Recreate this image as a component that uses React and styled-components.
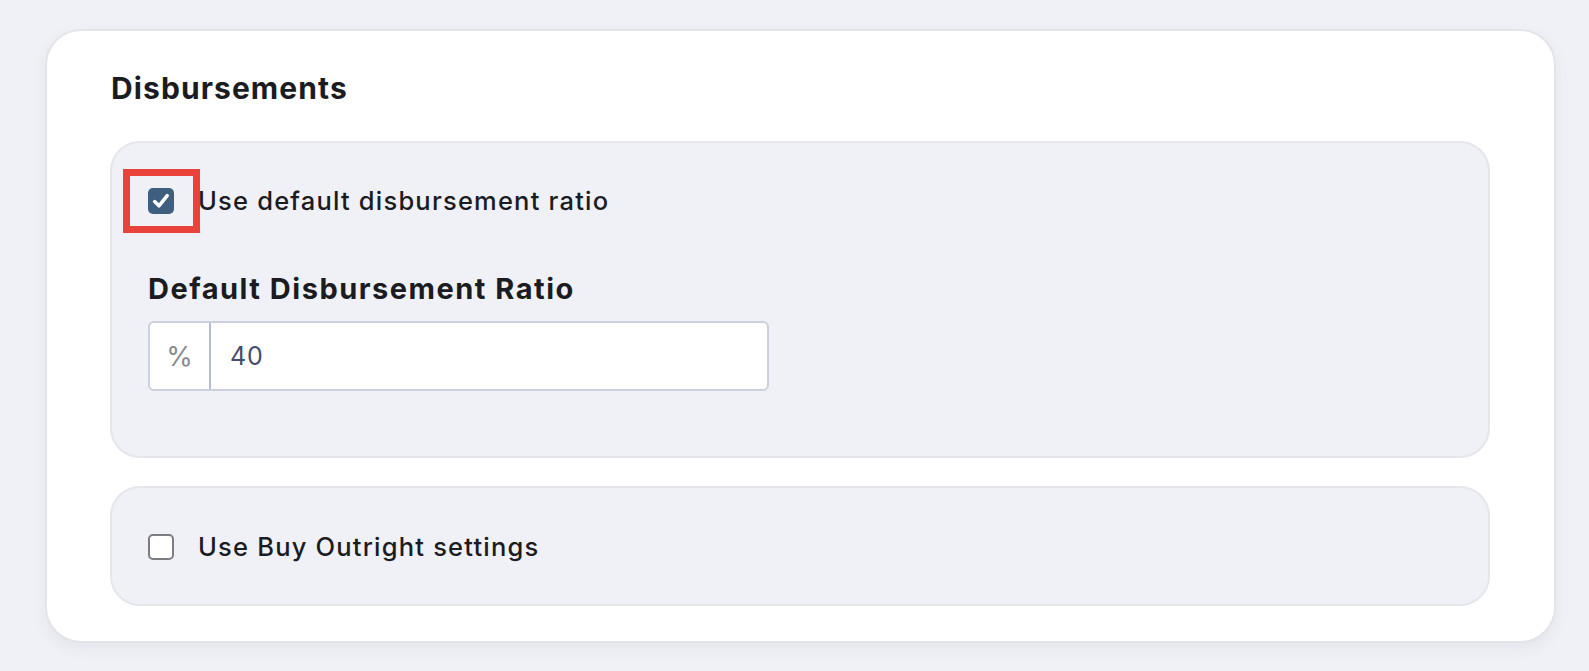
import React, { useState } from 'react'
import styled, { createGlobalStyle } from 'styled-components'

const GlobalStyle = createGlobalStyle`
  * {
    margin: 0;
    padding: 0;
    box-sizing: border-box;
  }
  html, body {
    overflow: hidden;
  }
  body {
    background: #f0f1f6;
    font-family: Inter, 'Noto Sans', sans-serif;
    color: #1b1c21;
  }
`

const Page = styled.div`
  padding: 29px 33px 24px 45px;
`

const Card = styled.section`
  background: #ffffff;
  border: 2px solid #e3e4e9;
  border-radius: 36px;
  box-shadow: 0 6px 16px rgba(40, 50, 90, 0.06);
  padding: 39px 64px 35px 63px;
  display: flex;
  flex-direction: column;
`

const Title = styled.h2`
  font-size: 30px;
  font-weight: 700;
  letter-spacing: 1.1px;
  line-height: 36px;
  margin-left: 1px;
  margin-bottom: 35px;
`

const Panel = styled.div`
  background: #f0f1f6;
  border: 2px solid #e4e6eb;
  border-radius: 30px;
  padding: ${p => p.$pad};
  display: flex;
  flex-direction: column;
  & + & {
    margin-top: 28px;
  }
`

const CheckRow = styled.label`
  display: flex;
  align-items: center;
  gap: 24px;
  font-size: 25.5px;
  font-weight: 500;
  letter-spacing: 1.2px;
  line-height: 30px;
  cursor: pointer;
`

const Highlight = styled.span`
  display: flex;
  padding: ${p => (p.$on ? '12px 19px 12px 18px' : '0')};
  margin: ${p => (p.$on ? '-19px -26px -19px -25px' : '0')};
  border: ${p => (p.$on ? '7px solid #e9423a' : 'none')};
`

const Box = styled.span`
  width: 26px;
  height: 26px;
  border-radius: 5px;
  display: flex;
  align-items: center;
  justify-content: center;
  background: ${p => (p.$checked ? '#3e5f7e' : '#ffffff')};
  border: ${p => (p.$checked ? 'none' : '2px solid #7c7d82')};
`

const FieldLabel = styled.div`
  font-size: 29px;
  font-weight: 700;
  line-height: 35px;
  letter-spacing: 1.5px;
  margin-top: 55px;
  margin-bottom: 15px;
`

const InputGroup = styled.div`
  display: flex;
  width: 621px;
  height: 70px;
  background: #ffffff;
  border: 2px solid #cbd0e0;
  border-radius: 6px;
`

const Prefix = styled.span`
  width: 61px;
  display: flex;
  align-items: center;
  justify-content: center;
  font-size: 27px;
  color: #8a8a8e;
  border-right: 2px solid #b3bcd6;
`

const Input = styled.input`
  flex: 1;
  border: none;
  outline: none;
  background: transparent;
  padding-left: 19px;
  font-family: inherit;
  font-size: 25px;
  letter-spacing: 0.8px;
  color: #444d6b;
`

function Check({ checked, highlight, onToggle, children }) {
  return (
    <CheckRow onClick={onToggle}>
      <Highlight $on={highlight}>
        <Box $checked={checked}>
          {checked && (
            <svg width="22" height="22" viewBox="0 0 22 22">
              <path d="M4.6 11.6 L9 15.8 L17.2 5.6" fill="none" stroke="#fff" strokeWidth="3.5" strokeLinecap="round" strokeLinejoin="round" />
            </svg>
          )}
        </Box>
      </Highlight>
      {children}
    </CheckRow>
  )
}

export default function App() {
  const [useDefault, setUseDefault] = useState(true)
  const [buyOutright, setBuyOutright] = useState(false)
  const [ratio, setRatio] = useState('40')

  return (
    <Page>
      <GlobalStyle />
      <Card>
        <Title>Disbursements</Title>
        <Panel $pad="43px 38px 65px 36px">
          <Check checked={useDefault} highlight onToggle={() => setUseDefault(!useDefault)}>
            Use default disbursement ratio
          </Check>
          <FieldLabel>Default Disbursement Ratio</FieldLabel>
          <InputGroup>
            <Prefix>%</Prefix>
            <Input value={ratio} onChange={e => setRatio(e.target.value)} />
          </InputGroup>
        </Panel>
        <Panel $pad="44px 38px 42px 36px">
          <Check checked={buyOutright} onToggle={() => setBuyOutright(!buyOutright)}>
            Use Buy Outright settings
          </Check>
        </Panel>
      </Card>
    </Page>
  )
}
